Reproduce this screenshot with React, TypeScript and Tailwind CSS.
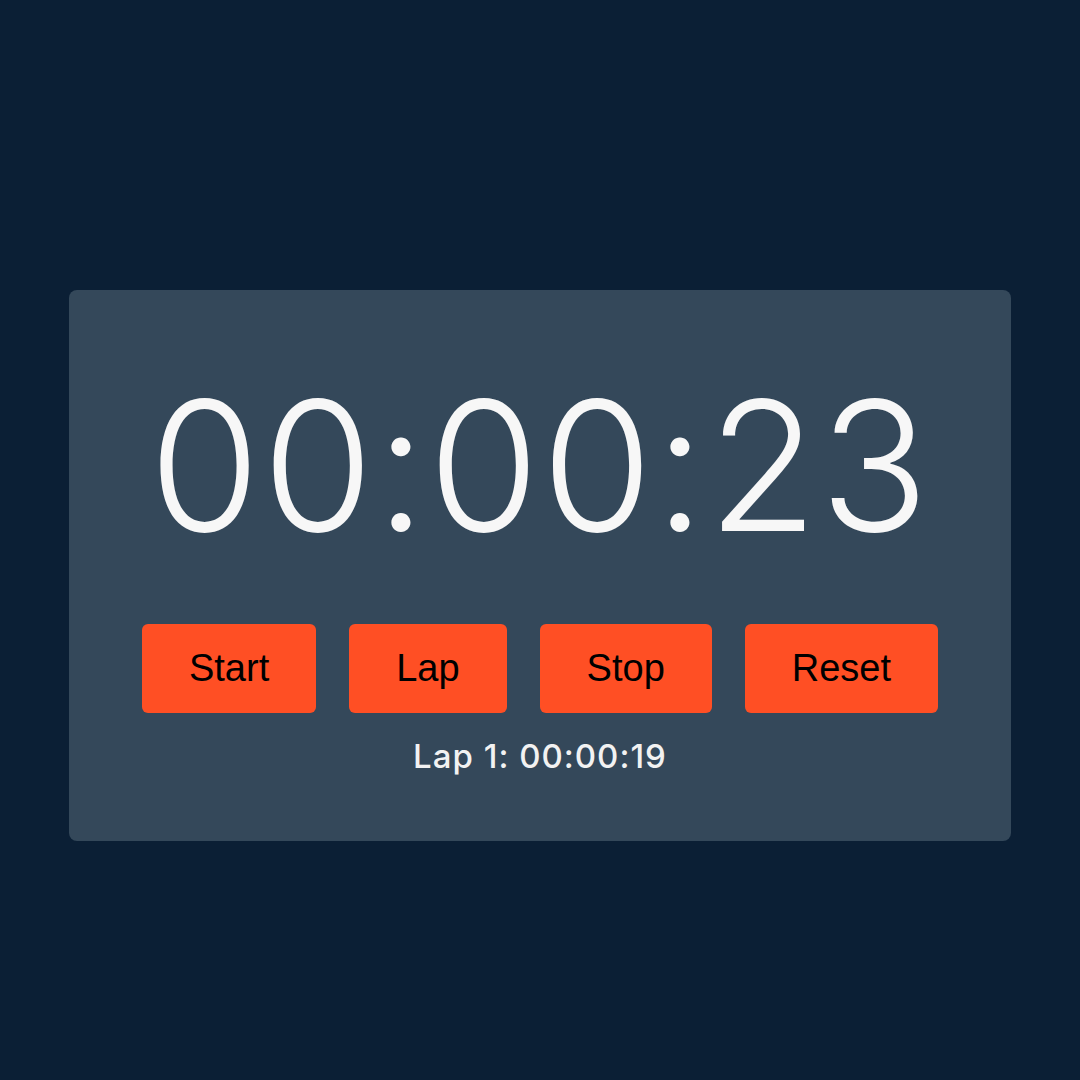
export default function App() {
  const buttons = ['Start', 'Lap', 'Stop', 'Reset']

  return (
    <div className="min-h-screen w-full bg-[#0b1f35] flex justify-center pt-[290px]">
      <div className="w-[942px] h-fit rounded-lg bg-[#34485a] flex flex-col items-center pt-[86px] pb-[68px]">
        {/* Timer */}
        <h1 className="font-['Inter',sans-serif] font-light text-[180px] leading-none text-[#f7f7f7] tracking-[2px]">
          00:00:23
        </h1>

        {/* Controls */}
        <div className="mt-[68px] flex gap-[33px]">
          {buttons.map((label) => (
            <button
              key={label}
              className="bg-[#ff4f24] rounded-md px-[47px] py-[16px] font-['Liberation_Sans',Arial,sans-serif] text-[38px] text-black"
            >
              {label}
            </button>
          ))}
        </div>

        {/* Laps */}
        <p className="mt-[27px] font-['Inter',sans-serif] font-medium text-[33px] leading-none text-[#f2f2f2] tracking-[1px]">
          Lap 1: 00:00:19
        </p>
      </div>
    </div>
  )
}
